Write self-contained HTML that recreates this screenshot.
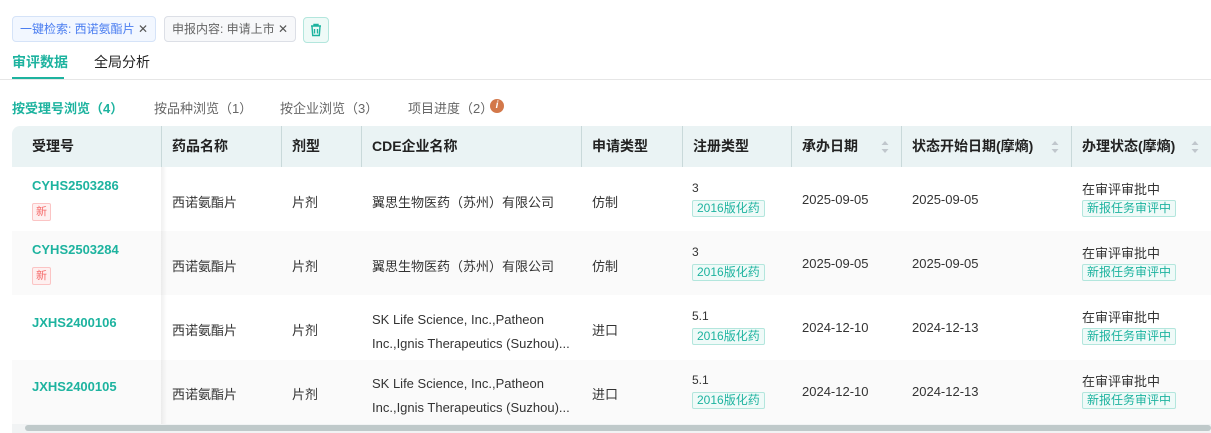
<!DOCTYPE html><html><head><meta charset="utf-8"><style>
*{box-sizing:border-box;margin:0;padding:0}
body{width:1211px;height:433px;overflow:hidden;background:#fff;font-family:"Liberation Sans","Noto Sans CJK SC",sans-serif;font-size:13px;color:#333;position:relative}
.a{position:absolute;white-space:nowrap}
.tag{position:absolute;height:26px;border:1px solid #dcdfe6;border-radius:4px;font-size:12px;line-height:24px;padding:0 7px;color:#666;background:#f7f8fa}
.teal{color:#1db39f}
.hdr{position:absolute;left:12px;top:126px;width:1199px;height:41px;background:#eaf3f4;border-radius:8px 0 0 0}
.hc{position:absolute;top:126px;height:41px;line-height:41px;font-weight:bold;font-size:14px;color:#222;padding-left:10px}
.sep{position:absolute;top:126px;height:41px;width:1px;background:#c9d9da}
.row{position:absolute;left:12px;width:1199px;height:64px}
.c{position:absolute;font-size:13px;color:#333}
.c.id{color:#1db39f;font-weight:bold}
.new{position:absolute;left:32px;width:19px;height:18px;border:1px solid #fbc4c4;background:#fef0f0;color:#f56c6c;font-size:11px;line-height:16px;text-align:center;border-radius:2px}
.gt{position:absolute;height:17px;border:1px solid #b3e6dd;background:#effaf8;color:#1db39f;font-size:12px;line-height:15px;padding:0 4px;border-radius:2px}
.sort{position:absolute;top:139px;width:8px;height:16px}
</style></head><body>
<div class="tag" style="left:12px;top:16px;background:#f2f7ff;border-color:#d5e3f8;color:#4a7df0">一键检索: 西诺氨酯片 <span style="color:#555">✕</span></div>
<div class="tag" style="left:164px;top:16px">申报内容: 申请上市 <span style="color:#555">✕</span></div>
<div class="tag" style="left:303px;top:17px;width:26px;height:26px;padding:0;background:#eefaf7;border-color:#b3e6dd">
<svg width="24" height="24" viewBox="0 0 24 24" style="position:absolute;left:0;top:0"><g fill="none" stroke="#1db39f" stroke-width="1.4"><path d="M7 8h10M10 8V6.5h4V8M8 8.5l.7 9h6.6l.7-9M10.5 11v4.5M13.5 11v4.5"/></g></svg></div>
<div class="a teal" style="left:12px;top:52px;font-size:14px;font-weight:bold">审评数据</div>
<div class="a" style="left:12px;top:77px;width:52px;height:2px;background:#1db39f"></div>
<div class="a" style="left:94px;top:52px;font-size:14px;color:#222">全局分析</div>
<div class="a" style="left:0;top:79px;width:1211px;height:1px;background:#e6e6e6"></div>
<div class="a teal" style="left:12px;top:98px;font-size:13px;font-weight:bold">按受理号浏览（4）</div>
<div class="a" style="left:154px;top:98px;color:#666">按品种浏览（1）</div>
<div class="a" style="left:280px;top:98px;color:#666">按企业浏览（3）</div>
<div class="a" style="left:408px;top:98px;color:#666">项目进度（2）</div>
<div class="a" style="left:490px;top:99px;width:14px;height:14px;border-radius:50%;background:#d3784a;color:#fff;font-size:10px;font-style:italic;font-weight:bold;text-align:center;line-height:14px">i</div>
<div class="hdr"></div>
<div class="hc" style="left:22px">受理号</div>
<div class="hc" style="left:162px">药品名称</div>
<div class="hc" style="left:282px">剂型</div>
<div class="hc" style="left:362px">CDE企业名称</div>
<div class="hc" style="left:582px">申请类型</div>
<div class="hc" style="left:683px">注册类型</div>
<div class="hc" style="left:792px">承办日期</div>
<div class="hc" style="left:902px">状态开始日期(摩熵)</div>
<div class="hc" style="left:1072px">办理状态(摩熵)</div>
<div class="sep" style="left:161px"></div><div class="sep" style="left:281px"></div><div class="sep" style="left:361px"></div><div class="sep" style="left:581px"></div><div class="sep" style="left:682px"></div><div class="sep" style="left:791px"></div><div class="sep" style="left:901px"></div><div class="sep" style="left:1071px"></div>
<svg class="sort" style="left:881px" viewBox="0 0 8 16"><path d="M4 2l3.5 4h-7zM4 14l3.5-4h-7z" fill="#c0c6cc"/></svg>
<svg class="sort" style="left:1051px" viewBox="0 0 8 16"><path d="M4 2l3.5 4h-7zM4 14l3.5-4h-7z" fill="#c0c6cc"/></svg>
<svg class="sort" style="left:1191px" viewBox="0 0 8 16"><path d="M4 2l3.5 4h-7zM4 14l3.5-4h-7z" fill="#c0c6cc"/></svg>

<div class="row" style="top:167px;background:#fff"></div>
<div class="row" style="top:231px;background:#fafafa"></div>
<div class="row" style="top:296px;background:#fff"></div>
<div class="row" style="top:360px;background:#fafafa"></div>
<div class="a" style="left:161px;top:167px;width:6px;height:257px;background:linear-gradient(to right,rgba(0,0,0,.06),rgba(0,0,0,0))"></div>

<div class="c id" style="left:32px;top:178px">CYHS2503286</div><div class="new" style="top:203px">新</div>
<div class="c id" style="left:32px;top:242px">CYHS2503284</div><div class="new" style="top:267px">新</div>
<div class="c id" style="left:32px;top:315px">JXHS2400106</div>
<div class="c id" style="left:32px;top:379px">JXHS2400105</div>

<div class="c" style="left:172px;top:192px">西诺氨酯片</div><div class="c" style="left:292px;top:192px">片剂</div><div class="c" style="left:372px;top:192px">翼思生物医药（苏州）有限公司</div><div class="c" style="left:592px;top:192px">仿制</div>
<div class="c" style="left:172px;top:256px">西诺氨酯片</div><div class="c" style="left:292px;top:256px">片剂</div><div class="c" style="left:372px;top:256px">翼思生物医药（苏州）有限公司</div><div class="c" style="left:592px;top:256px">仿制</div>
<div class="c" style="left:172px;top:320px">西诺氨酯片</div><div class="c" style="left:292px;top:320px">片剂</div><div class="c" style="left:372px;top:308px;line-height:24px">SK Life Science, Inc.,Patheon<br>Inc.,Ignis Therapeutics (Suzhou)...</div><div class="c" style="left:592px;top:320px">进口</div>
<div class="c" style="left:172px;top:384px">西诺氨酯片</div><div class="c" style="left:292px;top:384px">片剂</div><div class="c" style="left:372px;top:372px;line-height:24px">SK Life Science, Inc.,Patheon<br>Inc.,Ignis Therapeutics (Suzhou)...</div><div class="c" style="left:592px;top:384px">进口</div>

<div class="c" style="left:692px;top:181px;font-size:12px">3</div><div class="gt" style="left:692px;top:200px">2016版化药</div>
<div class="c" style="left:692px;top:245px;font-size:12px">3</div><div class="gt" style="left:692px;top:264px">2016版化药</div>
<div class="c" style="left:692px;top:309px;font-size:12px">5.1</div><div class="gt" style="left:692px;top:328px">2016版化药</div>
<div class="c" style="left:692px;top:373px;font-size:12px">5.1</div><div class="gt" style="left:692px;top:392px">2016版化药</div>

<div class="c" style="left:802px;top:192px">2025-09-05</div><div class="c" style="left:912px;top:192px">2025-09-05</div>
<div class="c" style="left:802px;top:256px">2025-09-05</div><div class="c" style="left:912px;top:256px">2025-09-05</div>
<div class="c" style="left:802px;top:320px">2024-12-10</div><div class="c" style="left:912px;top:320px">2024-12-13</div>
<div class="c" style="left:802px;top:384px">2024-12-10</div><div class="c" style="left:912px;top:384px">2024-12-13</div>

<div class="c" style="left:1082px;top:179px">在审评审批中</div><div class="gt" style="left:1082px;top:200px">新报任务审评中</div>
<div class="c" style="left:1082px;top:243px">在审评审批中</div><div class="gt" style="left:1082px;top:264px">新报任务审评中</div>
<div class="c" style="left:1082px;top:307px">在审评审批中</div><div class="gt" style="left:1082px;top:328px">新报任务审评中</div>
<div class="c" style="left:1082px;top:371px">在审评审批中</div><div class="gt" style="left:1082px;top:392px">新报任务审评中</div>

<div class="a" style="left:12px;top:424px;width:1199px;height:9px;background:#f1f3f4"></div>
<div class="a" style="left:25px;top:425px;width:1186px;height:6px;border-radius:3px;background:#bfc9ca"></div>
</body></html>
